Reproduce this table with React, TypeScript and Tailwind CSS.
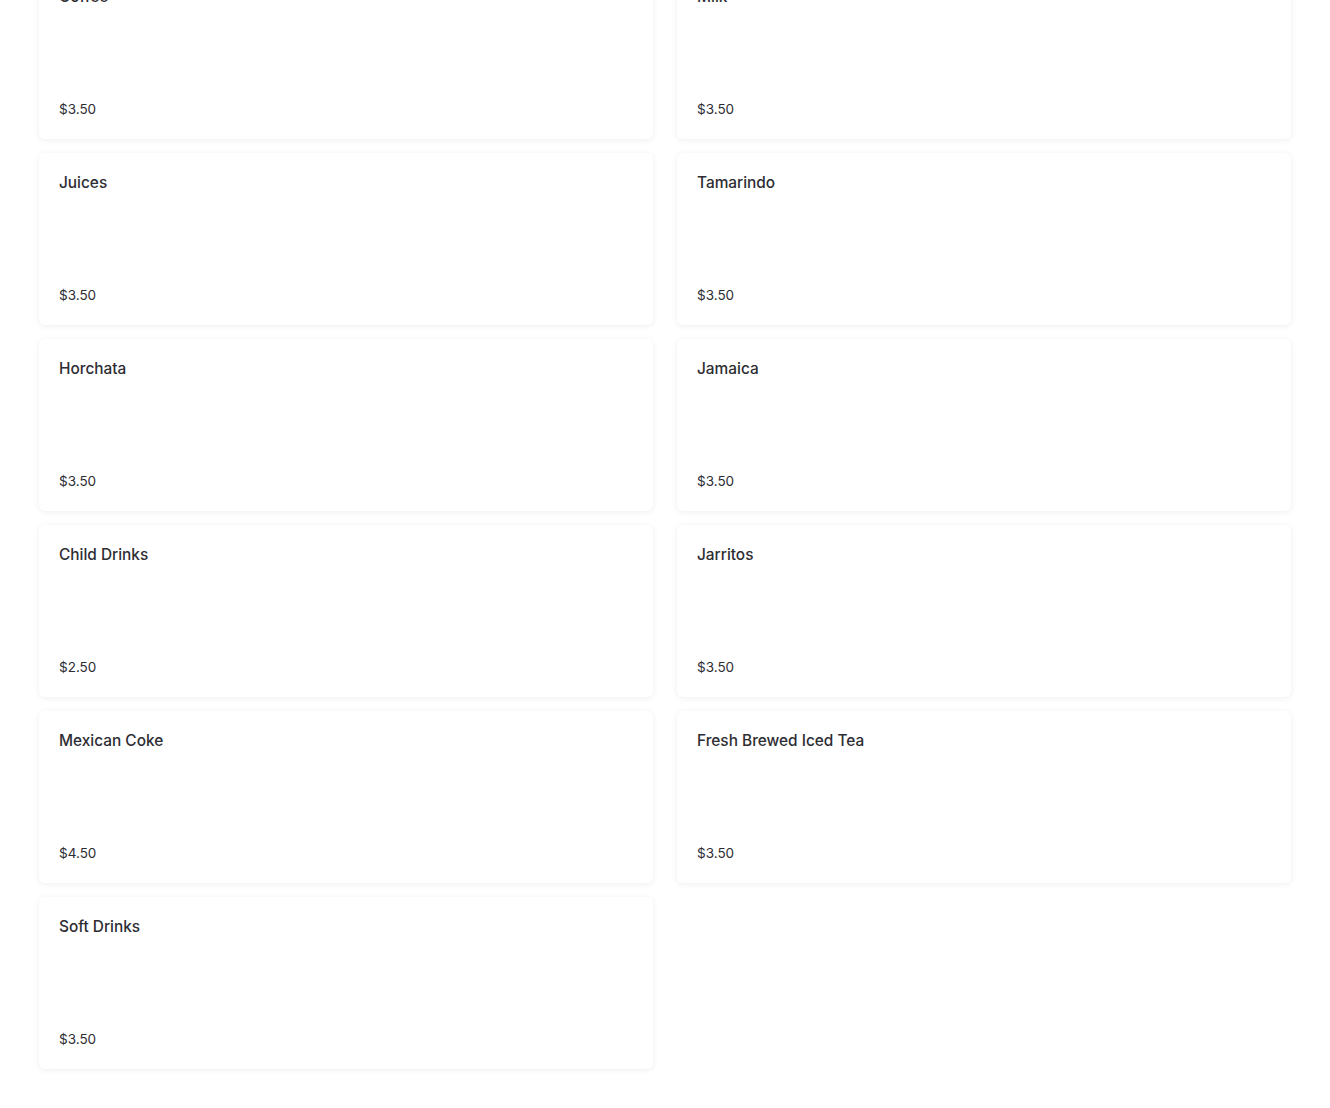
const items = [
  { name: "Coffee", price: "$3.50" },
  { name: "Milk", price: "$3.50" },
  { name: "Juices", price: "$3.50" },
  { name: "Tamarindo", price: "$3.50" },
  { name: "Horchata", price: "$3.50" },
  { name: "Jamaica", price: "$3.50" },
  { name: "Child Drinks", price: "$2.50" },
  { name: "Jarritos", price: "$3.50" },
  { name: "Mexican Coke", price: "$4.50" },
  { name: "Fresh Brewed Iced Tea", price: "$3.50" },
  { name: "Soft Drinks", price: "$3.50" },
];

export default function App() {
  return (
    <div className="h-[1108px] w-full overflow-hidden bg-white font-['Inter','Liberation_Sans',sans-serif] text-[#2d2d33]">
      <div className="-mt-[33px] grid grid-cols-2 gap-x-6 gap-y-[14px] px-[39px] pb-[39px]">
        {items.map((item) => (
          <MenuCard key={item.name} name={item.name} price={item.price} />
        ))}
      </div>
    </div>
  );
}

function MenuCard({ name, price }: { name: string; price: string }) {
  return (
    <div className="flex h-[172px] flex-col justify-between rounded-md bg-white px-5 pt-[19px] pb-[21px] shadow-[0_1px_6px_rgba(0,0,0,0.07)]">
      <div className="text-[15.4px] leading-[22px] font-medium">{name}</div>
      <div className="text-[13.5px] leading-[18px]">{price}</div>
    </div>
  );
}
